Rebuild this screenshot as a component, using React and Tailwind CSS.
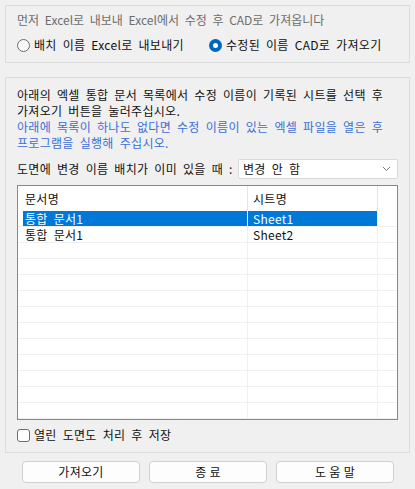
import React from "react";

const font = "font-['Noto_Sans_CJK_KR','Noto_Sans',sans-serif]";

function Radio({ checked, label, className }) {
  return (
    <label className={`flex items-center gap-[4px] ${className || ""}`}>
      {checked ? (
        <span className="flex h-[13px] w-[13px] items-center justify-center rounded-full bg-[#0067c0]">
          <span className="h-[5px] w-[5px] rounded-full bg-white" />
        </span>
      ) : (
        <span className="h-[13px] w-[13px] rounded-full border border-[#6e6e6e] bg-[#f7f7f7]" />
      )}
      <span>{label}</span>
    </label>
  );
}

const rows = [
  { doc: "통합 문서1", sheet: "Sheet1", selected: true },
  { doc: "통합 문서1", sheet: "Sheet2" },
];

export default function App() {
  const filled = [...rows];
  while (filled.length < 13) filled.push(null);

  return (
    <div
      className={`h-[489px] w-[415px] bg-[#f0f0f0] px-[5px] pt-[5px] text-[12px] leading-4 tracking-[0.3px] text-[#111] [word-spacing:3px] ${font}`}
    >
      {/* export / import group */}
      <div className="h-[58px] border border-[#dcdcdc] pl-[11px] pt-[6px]">
        <div className="tracking-normal text-[#6d6d6d]">먼저 Excel로 내보내 Excel에서 수정 후 CAD로 가져옵니다</div>
        <div className="mt-[9px] flex">
          <Radio label="배치 이름 Excel로 내보내기" className="w-[192px]" />
          <Radio checked label="수정된 이름 CAD로 가져오기" />
        </div>
      </div>

      {/* import group */}
      <div className="mt-[14px] flex h-[376px] flex-col border border-[#dcdcdc] pl-[11px] pr-[11px] pt-[9px]">
        <p>
          아래의 엑셀 통합 문서 목록에서 수정 이름이 기록된 시트를 선택 후
          <br />
          가져오기 버튼을 눌러주십시오.
        </p>
        <p className="text-[#3a6fd8]">
          아래에 목록이 하나도 없다면 수정 이름이 있는 엑셀 파일을 열은 후
          <br />
          프로그램을 실행해 주십시오.
        </p>

        <div className="mt-[8px] flex h-[20px] items-center">
          <span className="w-[221px]">도면에 변경 이름 배치가 이미 있을 때 :</span>
          <div className="flex h-[20px] flex-1 items-center justify-between rounded-[2px] border border-[#d9d9d9] bg-white pl-[4px] pr-[6px]">
            <span>변경 안 함</span>
            <svg width="9" height="6" viewBox="0 0 9 6" fill="none">
              <path d="M1 1l3.5 3.5L8 1" stroke="#777" strokeWidth="1" />
            </svg>
          </div>
        </div>

        {/* sheet list */}
        <div className="mt-[6px] h-[235px] overflow-hidden border border-[#828790] bg-white">
          <div className="flex h-[25px]">
            <div className="flex w-[230px] items-center border-r border-[#e5e5e5] pl-[7px]">문서명</div>
            <div className="flex w-[130px] items-center border-r border-[#e5e5e5] pl-[5px]">시트명</div>
            <div className="flex-1" />
          </div>
          {filled.map((r, i) => (
            <div key={i} className="flex h-4 border-b border-[#f0f0f0]">
              <div className="w-[230px] border-r border-[#f0f0f0] pl-[5px]">
                {r && (
                  <div className={`h-full pl-[2px] ${r.selected ? "bg-[#0078d7] text-white" : ""}`}>
                    {r.doc}
                  </div>
                )}
              </div>
              <div
                className={`w-[130px] border-r border-[#f0f0f0] pl-[5px] ${
                  r && r.selected ? "bg-[#0078d7] text-white" : ""
                }`}
              >
                {r && r.sheet}
              </div>
              <div className="flex-1" />
            </div>
          ))}
        </div>

        <label className="mt-[7px] flex items-center gap-[4px]">
          <span className="h-[13px] w-[13px] rounded-[3px] border border-[#6e6e6e] bg-white" />
          <span>열린 도면도 처리 후 저장</span>
        </label>
      </div>

      {/* buttons */}
      <div className="mt-[8px] flex gap-[9px] pl-[17px]">
        {["가져오기", "종 료", "도 움 말"].map((b) => (
          <button
            key={b}
            className="h-[22px] w-[118px] rounded-[4px] border border-[#d0d0d0] bg-[#fdfdfd] text-[12px]"
          >
            {b}
          </button>
        ))}
      </div>
    </div>
  );
}
